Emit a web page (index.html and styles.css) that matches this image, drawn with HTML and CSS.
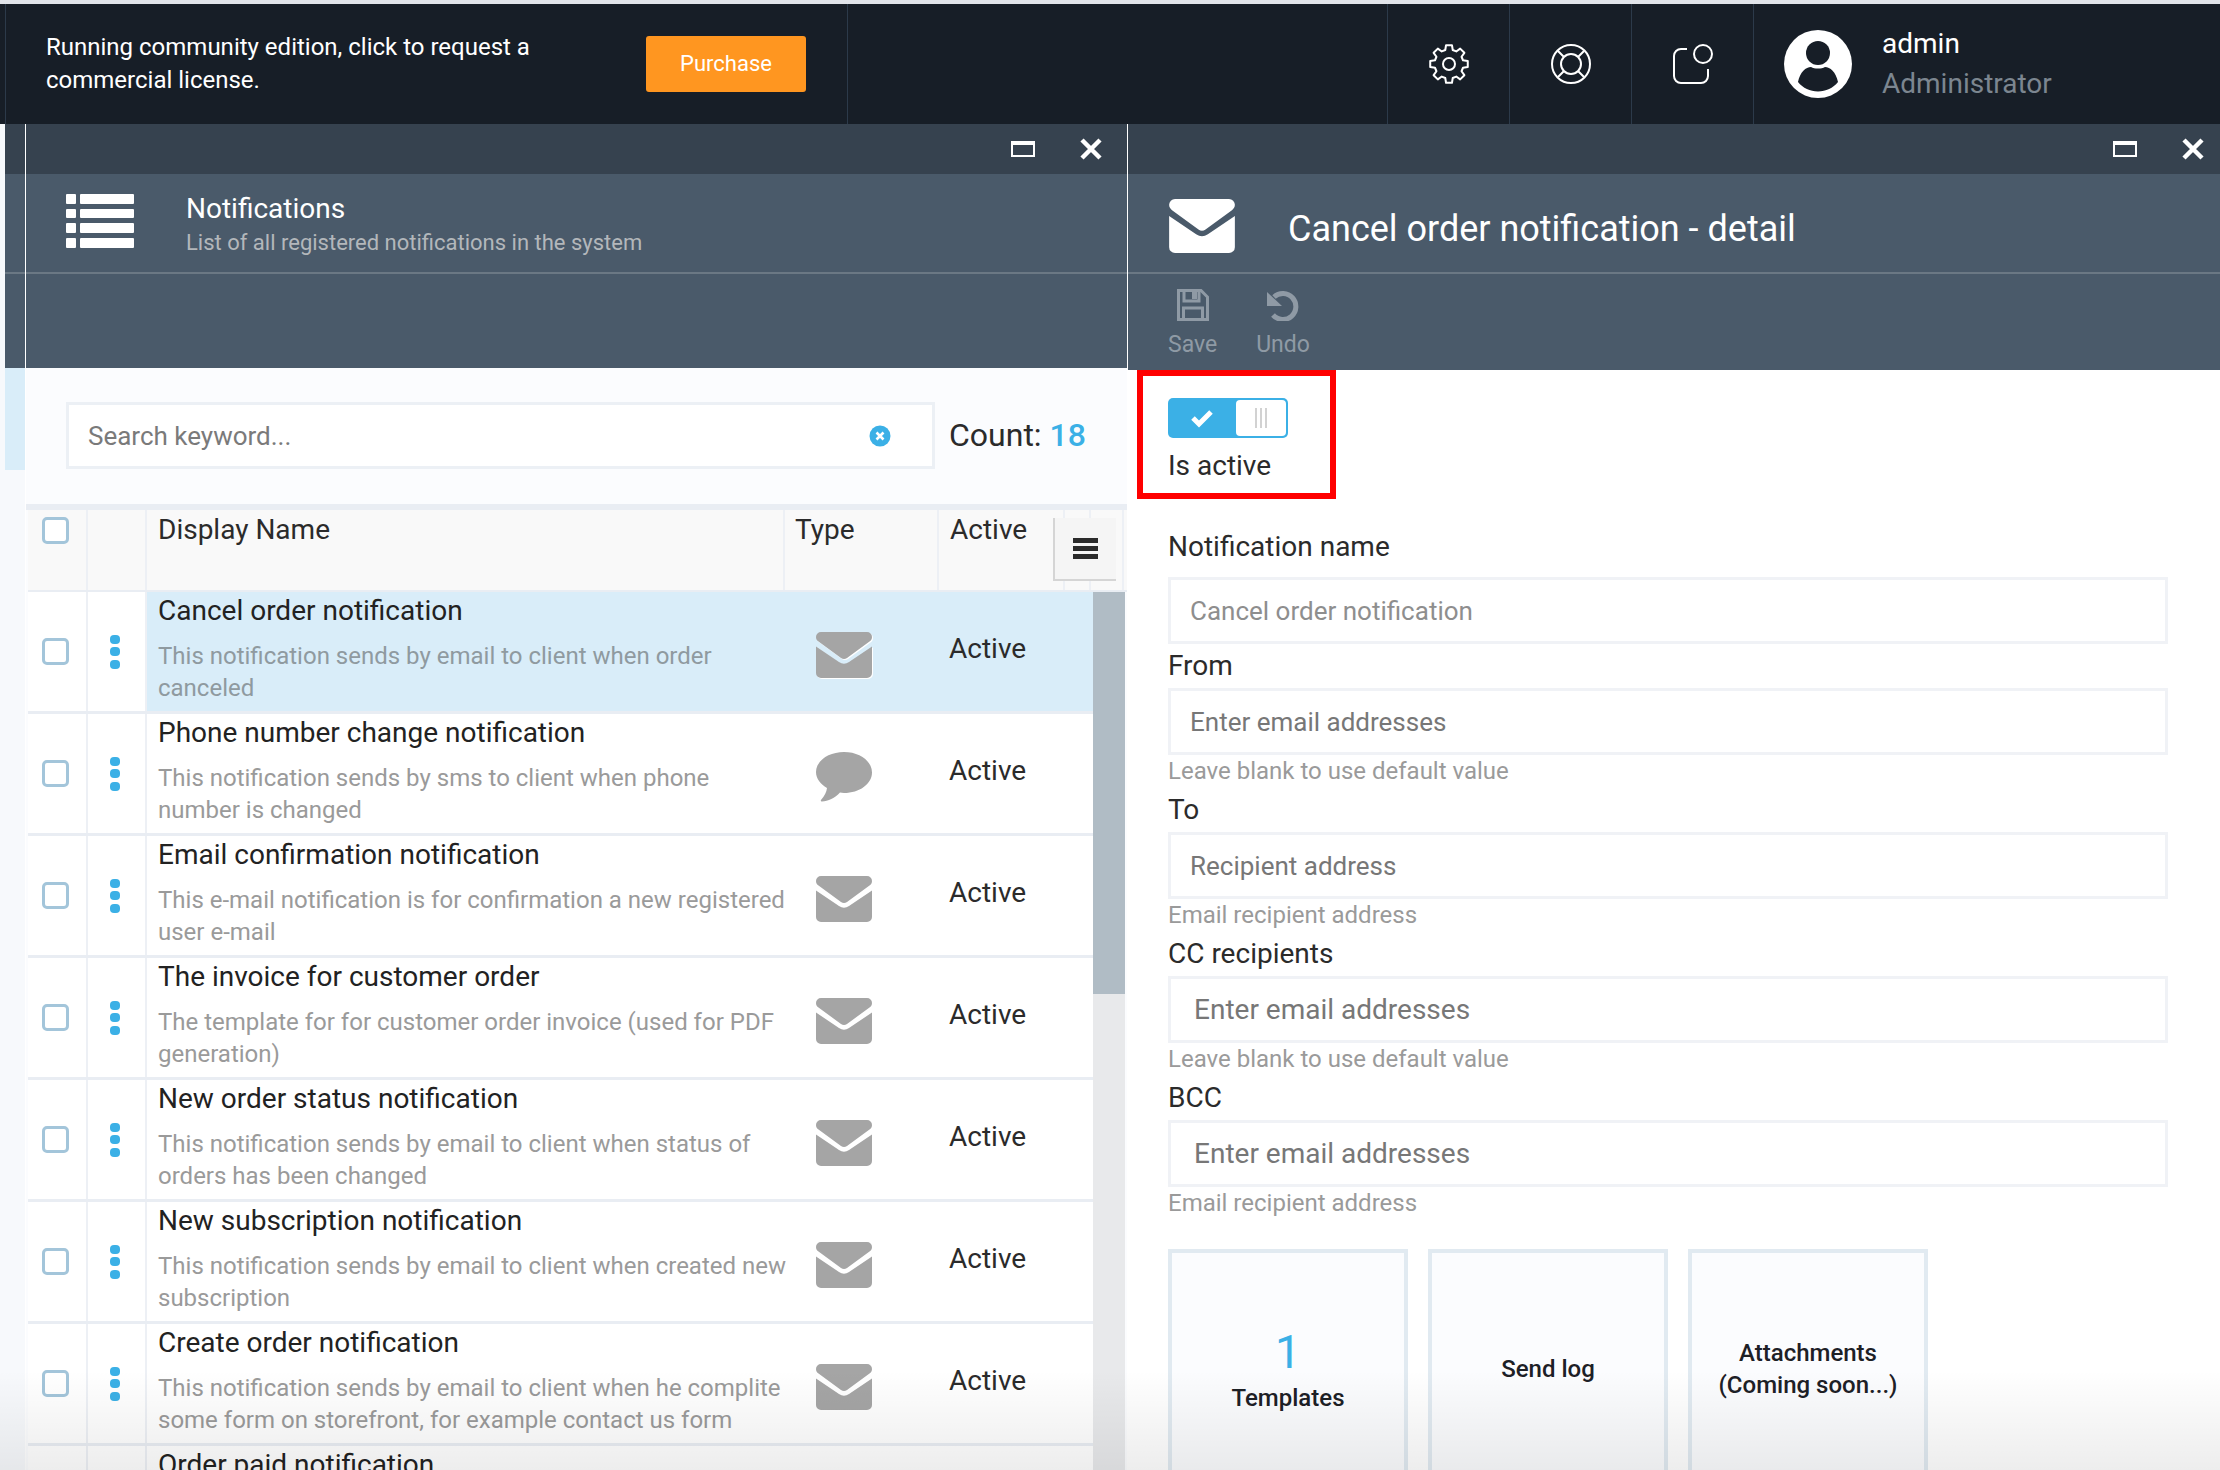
FILE: index.html
```html
<!DOCTYPE html>
<html lang="en">
<head>
  <meta charset="UTF-8">
  <title>Notifications</title>
  <link rel="stylesheet" href="styles.css">
</head>
<body>

  <svg class="defs" width="0" height="0">
    <symbol id="mail" viewBox="0 0 56 46">
      <path d="M0 5a5 5 0 0 1 5-5h46a5 5 0 0 1 5 5c0 2-1 3.500-2.500 4.500L31 26q-3 2-6 0L2.500 9.500C1 8.500 0 7 0 5z"/>
      <path d="M0 14.500L23 30q5 3.500 10 0L56 14.500V41a5 5 0 0 1-5 5H5a5 5 0 0 1-5-5z"/>
    </symbol>
    <symbol id="dots" viewBox="0 0 10 34">
      <rect width="10" height="9" rx="4"/>
      <rect y="12" width="10" height="9" rx="4"/>
      <rect y="25" width="10" height="9" rx="4"/>
    </symbol>
    <symbol id="bubble" viewBox="0 0 56 50">
      <path d="M28 0C12.500 0 0 8.900 0 20c0 6.500 4.500 12.300 11 16-.4 4-2.500 8-6 12-.5 1 0 1.500 1 1.500 6 0 13-3.500 18-9 1.300.3 2.600.5 4 .5 15.500 0 28-9 28-20.500S43.500 0 28 0z"/>
    </symbol>
  </svg>

  <header class="topbar">
    <div class="license">
      <p>Running community edition, click to request a commercial license.</p>
      <button class="purchase">Purchase</button>
    </div>
    <div class="topbar-space"></div>
    <div class="top-icon">
      <svg width="40" height="40" viewBox="0 0 40 40" fill="none" stroke="#fff" stroke-width="2" stroke-linejoin="round">
        <polygon points="16.25,6 17.03,1.23 22.97,1.23 23.75,6 27.25,7.45 31.17,4.63 35.37,8.83 32.55,12.75 34,16.25 38.77,17.03 38.77,22.97 34,23.75 32.55,27.25 35.37,31.17 31.17,35.37 27.25,32.55 23.75,34 22.97,38.77 17.03,38.77 16.25,34 12.75,32.55 8.83,35.37 4.63,31.17 7.45,27.25 6,23.75 1.23,22.97 1.23,17.03 6,16.25 7.45,12.75 4.63,8.83 8.83,4.63 12.75,7.45"/>
        <circle cx="20" cy="20" r="6"/>
      </svg>
    </div>
    <div class="top-icon">
      <svg width="40" height="40" viewBox="0 0 40 40" fill="none" stroke="#fff" stroke-width="2">
        <circle cx="20" cy="20" r="19"/>
        <circle cx="20" cy="20" r="10"/>
        <path d="M7 7l6 6M33 7l-6 6M7 33l6-6M33 33l-6-6"/>
      </svg>
    </div>
    <div class="top-icon">
      <svg width="40" height="40" viewBox="0 0 40 40" fill="none" stroke="#fff" stroke-width="2">
        <path d="M14 5H8a7 7 0 0 0-7 7v20a7 7 0 0 0 7 7h20a7 7 0 0 0 7-7v-7"/>
        <circle cx="30" cy="10" r="9"/>
      </svg>
    </div>
    <div class="user">
      <svg width="68" height="68" viewBox="0 0 68 68">
        <circle cx="34" cy="34" r="34" fill="#fff"/>
        <circle cx="34" cy="23" r="12" fill="#171e27"/>
        <path d="M14 52c2-10 8-15 13-15 2 1 4 1.500 7 1.500s5-.5 7-1.500c5 0 11 5 13 15-5 6-12 9.500-20 9.500s-15-3.500-20-9.500z" fill="#171e27"/>
      </svg>
      <div>
        <div class="user-name">admin</div>
        <div class="user-role">Administrator</div>
      </div>
    </div>
  </header>

  <main class="workspace">
    <section class="blade blade-list">
      <div class="blade-behind">
        <div class="behind-selected"></div>
      </div>
      <div class="blade-main">
        <div class="blade-controls controls-list">
          <span class="ctl-max"></span>
          <svg class="ctl-close" width="24" height="24" viewBox="0 0 24 24"><path d="M3 3l18 18M21 3L3 21" stroke="#fff" stroke-width="4.500"/></svg>
        </div>
        <div class="blade-head">
          <svg class="head-icon" width="68" height="54" viewBox="0 0 68 54" fill="#fff">
            <rect y="0" width="10" height="10" rx="1"/><rect x="14" y="0" width="54" height="10" rx="1"/>
            <rect y="15" width="10" height="9" rx="1"/><rect x="14" y="15" width="54" height="9" rx="1"/>
            <rect y="29" width="10" height="10" rx="1"/><rect x="14" y="29" width="54" height="10" rx="1"/>
            <rect y="44" width="10" height="10" rx="1"/><rect x="14" y="44" width="54" height="10" rx="1"/>
          </svg>
          <div>
            <div class="head-title">Notifications</div>
            <div class="head-sub">List of all registered notifications in the system</div>
          </div>
        </div>
        <div class="blade-toolbar"></div>

        <div class="search-row">
          <div class="search-box">
            <input class="search-input" placeholder="Search keyword...">
            <svg width="22" height="22" viewBox="0 0 22 22">
              <circle cx="11" cy="11" r="10.500" fill="#3bb0e6"/>
              <path d="M7.500 7.500l7 7M14.500 7.500l-7 7" stroke="#fff" stroke-width="2.600"/>
            </svg>
          </div>
          <div class="count">Count: <b>18</b></div>
        </div>

        <div class="table">
          <div class="row row-head">
            <div class="cell cell-check"><span class="check"></span></div>
            <div class="cell"></div>
            <div class="cell cell-text">Display Name</div>
            <div class="cell cell-text cell-type">Type</div>
            <div class="cell cell-text">Active</div>
            <div class="cell"></div>
            <div class="cell"></div>
            <div class="columns-btn"><i></i><i></i><i></i></div>
          </div>
          <div class="table-body">
            <div class="rows">
              <div class="row row-selected">
                <div class="cell cell-check"><span class="check"></span></div>
                <div class="cell cell-dots"><svg width="10" height="34" class="dots"><use href="#dots"/></svg></div>
                <div class="cell cell-name"><div class="name">Cancel order notification</div><div class="desc">This notification sends by email to client when order canceled</div></div>
                <div class="cell cell-icon"><svg width="56" height="46" class="type-icon"><use href="#mail"/></svg></div>
                <div class="cell cell-status">Active</div>
              </div>
              <div class="row">
                <div class="cell cell-check"><span class="check"></span></div>
                <div class="cell cell-dots"><svg width="10" height="34" class="dots"><use href="#dots"/></svg></div>
                <div class="cell cell-name"><div class="name">Phone number change notification</div><div class="desc">This notification sends by sms to client when phone number is changed</div></div>
                <div class="cell cell-icon"><svg width="56" height="50" class="type-icon"><use href="#bubble"/></svg></div>
                <div class="cell cell-status">Active</div>
              </div>
              <div class="row">
                <div class="cell cell-check"><span class="check"></span></div>
                <div class="cell cell-dots"><svg width="10" height="34" class="dots"><use href="#dots"/></svg></div>
                <div class="cell cell-name"><div class="name">Email confirmation notification</div><div class="desc">This e-mail notification is for confirmation a new registered user e-mail</div></div>
                <div class="cell cell-icon"><svg width="56" height="46" class="type-icon"><use href="#mail"/></svg></div>
                <div class="cell cell-status">Active</div>
              </div>
              <div class="row">
                <div class="cell cell-check"><span class="check"></span></div>
                <div class="cell cell-dots"><svg width="10" height="34" class="dots"><use href="#dots"/></svg></div>
                <div class="cell cell-name"><div class="name">The invoice for customer order</div><div class="desc">The template for for customer order invoice (used for PDF generation)</div></div>
                <div class="cell cell-icon"><svg width="56" height="46" class="type-icon"><use href="#mail"/></svg></div>
                <div class="cell cell-status">Active</div>
              </div>
              <div class="row">
                <div class="cell cell-check"><span class="check"></span></div>
                <div class="cell cell-dots"><svg width="10" height="34" class="dots"><use href="#dots"/></svg></div>
                <div class="cell cell-name"><div class="name">New order status notification</div><div class="desc">This notification sends by email to client when status of orders has been changed</div></div>
                <div class="cell cell-icon"><svg width="56" height="46" class="type-icon"><use href="#mail"/></svg></div>
                <div class="cell cell-status">Active</div>
              </div>
              <div class="row">
                <div class="cell cell-check"><span class="check"></span></div>
                <div class="cell cell-dots"><svg width="10" height="34" class="dots"><use href="#dots"/></svg></div>
                <div class="cell cell-name"><div class="name">New subscription notification</div><div class="desc">This notification sends by email to client when created new subscription</div></div>
                <div class="cell cell-icon"><svg width="56" height="46" class="type-icon"><use href="#mail"/></svg></div>
                <div class="cell cell-status">Active</div>
              </div>
              <div class="row">
                <div class="cell cell-check"><span class="check"></span></div>
                <div class="cell cell-dots"><svg width="10" height="34" class="dots"><use href="#dots"/></svg></div>
                <div class="cell cell-name"><div class="name">Create order notification</div><div class="desc">This notification sends by email to client when he complite some form on storefront, for example contact us form</div></div>
                <div class="cell cell-icon"><svg width="56" height="46" class="type-icon"><use href="#mail"/></svg></div>
                <div class="cell cell-status">Active</div>
              </div>
              <div class="row">
                <div class="cell cell-check"></div>
                <div class="cell cell-dots"></div>
                <div class="cell cell-name"><div class="name">Order paid notification</div></div>
                <div class="cell cell-icon"></div>
                <div class="cell cell-status"></div>
              </div>
            </div>
            <div class="scroll-track"><div class="scroll-thumb"></div></div>
          </div>
        </div>
      </div>
    </section>

    <section class="blade blade-detail">
      <div class="blade-controls controls-detail">
        <span class="ctl-max"></span>
        <svg class="ctl-close" width="24" height="24" viewBox="0 0 24 24"><path d="M3 3l18 18M21 3L3 21" stroke="#fff" stroke-width="4.500"/></svg>
      </div>
      <div class="blade-head">
        <svg class="head-mail" width="68" height="54"><use href="#mail"/></svg>
        <div class="detail-title">Cancel order notification - detail</div>
      </div>
      <div class="blade-toolbar toolbar-detail">
        <div class="tool">
          <svg width="32" height="32" viewBox="0 0 32 32" fill="none" stroke="#8f9aa5" stroke-width="3">
            <path d="M1.500 1.500H24L30.500 8v22.500H1.500z"/>
            <path d="M7 2v10h15V2M6.500 30V19h19v11"/>
            <rect x="15" y="3" width="5" height="7" fill="#8f9aa5" stroke="none"/>
          </svg>
          <span>Save</span>
        </div>
        <div class="tool">
          <svg width="32" height="32" viewBox="0 0 32 32" fill="none" stroke="#8f9aa5" stroke-width="5">
            <path d="M7 8a13 13 0 1 1-1 18"/>
            <path d="M0 3v14h15z" stroke="none" fill="#8f9aa5"/>
          </svg>
          <span>Undo</span>
        </div>
      </div>

      <div class="form">
        <div class="annotation"></div>
        <div class="toggle">
          <svg width="24" height="20" viewBox="0 0 24 20"><path d="M3 10l6 6L21 4" fill="none" stroke="#fff" stroke-width="5"/></svg>
          <div class="toggle-knob"><i></i><i></i><i></i></div>
        </div>
        <div class="toggle-label">Is active</div>

        <label class="field-label first-label">Notification name</label>
        <input class="field-input first-input" placeholder="Cancel order notification">

        <label class="field-label">From</label>
        <input class="field-input" placeholder="Enter email addresses">
        <div class="hint">Leave blank to use default value</div>

        <label class="field-label">To</label>
        <input class="field-input" placeholder="Recipient address">
        <div class="hint">Email recipient address</div>

        <label class="field-label">CC recipients</label>
        <input class="field-input field-input-large" placeholder="Enter email addresses">
        <div class="hint">Leave blank to use default value</div>

        <label class="field-label">BCC</label>
        <input class="field-input field-input-large" placeholder="Enter email addresses">
        <div class="hint">Email recipient address</div>

        <div class="tiles">
          <div class="tile"><div class="tile-num">1</div><div>Templates</div></div>
          <div class="tile"><div>Send log</div></div>
          <div class="tile"><div>Attachments<br>(Coming soon...)</div></div>
        </div>
      </div>
    </section>
  </main>

  <div class="bottom-fade"></div>

</body>
</html>
```

FILE: styles.css
```css
* {
  box-sizing: border-box;
}

html, body {
  height: 100%;
}

body {
  margin: 0;
  height: 1470px;
  padding-top: 4px;
  overflow: hidden;
  background-color: #e1e4ea;
  font-family: Roboto, sans-serif;
  color: #2b2b2b;
  position: relative;
}

.defs {
  display: block;
  height: 0;
}

/* top bar */
.topbar {
  display: flex;
  height: 120px;
  background-color: #171e27;
  color: #fff;
}

.license {
  display: flex;
  align-items: center;
  width: 843px;
  padding-left: 40px;
  border-left: 1px solid #2c3a4a;
  border-right: 1px solid #2c3a4a;
  margin-left: 5px;
}

.license p {
  margin: 0;
  width: 520px;
  flex: none;
  font-size: 24px;
  line-height: 33px;
}

.purchase {
  width: 160px;
  height: 56px;
  margin-left: 80px;
  padding-bottom: 3px;
  flex: none;
  border: none;
  border-radius: 3px;
  background-color: #ff9620;
  color: #fff;
  font-family: Roboto, sans-serif;
  font-size: 22px;
}

.topbar-space {
  width: 539px;
}

.top-icon {
  display: flex;
  align-items: center;
  justify-content: center;
  width: 122px;
  border-left: 1px solid #2c3a4a;
}

.user {
  display: flex;
  align-items: center;
  gap: 30px;
  padding-left: 30px;
  border-left: 1px solid #2c3a4a;
}

.user-name {
  font-size: 28px;
  line-height: 40px;
}

.user-role {
  font-size: 28px;
  line-height: 40px;
  color: #7c8690;
}

/* blades */
.workspace {
  display: flex;
  height: 1346px;
}

.blade-list {
  display: flex;
  flex: 0 0 1127px;
  background-color: #f7f9fc;
}

.blade-behind {
  flex: 0 0 26px;
  padding-left: 5px;
  background:
    linear-gradient(#36424f 50px, #4a5a6a 50px, #4a5a6a 148px, #6b7884 148px, #6b7884 150px, #4a5a6a 150px, #4a5a6a 244px, transparent 244px);
  background-clip: content-box;
  border-right: 1px solid #fff;
}

.behind-selected {
  margin-top: 244px;
  height: 102px;
  background-color: #d9edf9;
}

.blade-main {
  flex: 1;
  min-width: 0;
  background-color: #fbfcfe;
}

.blade-detail {
  flex: 1;
  border-left: 1px solid #fff;
  background-color: #fff;
}

.blade-controls {
  display: flex;
  justify-content: flex-end;
  align-items: center;
  gap: 44px;
  height: 50px;
  background-color: #36424f;
}

.controls-list {
  padding-right: 24px;
}

.controls-detail {
  padding-right: 15px;
}

.ctl-max {
  display: block;
  width: 24px;
  height: 16px;
  border: 2px solid #fff;
  border-top-width: 4px;
}

.blade-head {
  display: flex;
  align-items: center;
  height: 100px;
  padding-left: 40px;
  gap: 52px;
  background-color: #4a5a6a;
  border-bottom: 2px solid #6b7884;
  color: #fff;
}

.head-icon {
  margin-top: -4px;
}

.head-title {
  font-size: 28px;
  line-height: 34px;
  margin-top: 3px;
}

.head-sub {
  font-size: 22px;
  line-height: 30px;
  margin-top: 2px;
  color: #b3b7bb;
}

.head-mail {
  fill: #fff;
  margin-top: 6px;
}

.detail-title {
  padding-top: 12px;
  font-size: 36px;
}

.blade-toolbar {
  height: 94px;
  background-color: #4a5a6a;
}

.toolbar-detail {
  display: flex;
  gap: 39px;
  height: 96px;
  padding: 15px 0 0 40px;
}

.tool {
  display: flex;
  flex-direction: column;
  align-items: center;
  gap: 10px;
  color: #8f9aa5;
  font-size: 23px;
}

/* search */
.search-row {
  display: flex;
  align-items: flex-start;
  height: 142px;
  padding: 34px 0 0 40px;
  gap: 14px;
  border-bottom: 6px solid #e9edf3;
}

.search-box {
  display: flex;
  align-items: center;
  width: 869px;
  height: 67px;
  padding: 0 41px 0 17px;
  border: 3px solid #ecf0f5;
  background-color: #fff;
}

.search-input {
  flex: 1;
  border: none;
  outline: none;
  background: none;
  font-family: Roboto, sans-serif;
  font-size: 26px;
}

.search-input::placeholder {
  color: #7a7a7a;
}

.count {
  font-size: 32px;
  line-height: 67px;
}

.count b {
  font-weight: 500;
  color: #3bb0e6;
}

/* table */
.table {
  padding-left: 2px;
}

.row {
  display: grid;
  grid-template-columns: 60px 59px 638px 154px 154px;
  height: 122px;
  background-color: #fff;
  border-bottom: 3px solid #e9edf3;
}

.row-head {
  grid-template-columns: 60px 59px 638px 154px 126px 26px 33px;
  height: 82px;
  background-color: #f9f9f9;
  position: relative;
  border-bottom-width: 2px;
}

.row-selected {
  background: linear-gradient(90deg, #fff 119px, #d9edf9 119px);
}

.cell {
  border-right: 2px solid #edf0f5;
  min-width: 0;
}

.row-selected .cell:nth-child(n+3) {
  border-right: none;
}

.cell-check {
  display: flex;
  align-items: center;
  justify-content: center;
  padding-right: 4px;
}

.row-head .cell-check {
  align-items: flex-start;
  padding-top: 7px;
}

.check {
  display: block;
  width: 27px;
  height: 27px;
  border: 3px solid #a3c5da;
  border-radius: 5px;
  background-color: #fff;
}

.cell-text {
  padding: 2px 0 0 11px;
  font-size: 28px;
  line-height: 36px;
}

.cell-type {
  padding-left: 10px;
}

.columns-btn {
  position: absolute;
  top: 8px;
  right: 11px;
  display: flex;
  flex-direction: column;
  justify-content: center;
  gap: 3px;
  width: 63px;
  height: 63px;
  padding: 0 18px;
  background-color: #f5f5f5;
  border-left: 2px solid #d5d5d5;
  border-bottom: 2px solid #d5d5d5;
}

.columns-btn i {
  display: block;
  height: 5px;
  background-color: #2b2b2b;
}

.table-body {
  display: flex;
}

.rows {
  flex: 0 0 1065px;
  min-width: 0;
}

.scroll-track {
  flex: 0 0 32px;
  height: 900px;
  background-color: #e8e9eb;
}

.scroll-thumb {
  height: 402px;
  background-color: #b0bcc5;
}

.cell-dots {
  display: flex;
  align-items: center;
  justify-content: center;
  padding-right: 4px;
}

.dots {
  fill: #3bb0e6;
}

.cell-name {
  padding-left: 11px;
  border-right: none;
}

.name {
  font-size: 28px;
  line-height: 34px;
  margin-top: 2px;
  color: #222;
}

.desc {
  margin: 12px -12px 0 0;
  font-size: 24px;
  line-height: 32px;
  color: #9a9a9a;
}

.row-selected .desc {
  color: #8f9aa0;
}

.cell-icon {
  display: flex;
  align-items: center;
  padding: 7px 0 0 31px;
  border-right: none;
}

.type-icon {
  fill: #a5a5a5;
  filter: drop-shadow(1px 1px 0 #fff);
}

.cell-status {
  display: flex;
  align-items: center;
  padding-left: 10px;
  padding-bottom: 6px;
  font-size: 28px;
  border-right: none;
}

/* detail form */
.form {
  position: relative;
  padding: 28px 52px 0 40px;
}

.annotation {
  position: absolute;
  top: 0;
  left: 9px;
  width: 199px;
  height: 129px;
  border: 6px solid #ff0000;
}

.toggle {
  display: flex;
  align-items: center;
  justify-content: space-between;
  width: 120px;
  height: 40px;
  padding: 2px 2px 2px 22px;
  border-radius: 5px;
  background-color: #3bb0e6;
}

.toggle-knob {
  display: flex;
  align-items: center;
  justify-content: center;
  gap: 3px;
  width: 50px;
  height: 36px;
  border-radius: 4px;
  background-color: #fff;
}

.toggle-knob i {
  display: block;
  width: 2px;
  height: 20px;
  background-color: #d2d2d2;
}

.toggle-label {
  margin-top: 12px;
  font-size: 28px;
  line-height: 32px;
}

.field-label {
  display: block;
  margin: 6px 0;
  font-size: 28px;
  line-height: 32px;
}

.first-label {
  margin: 49px 0 14px;
}

.field-input {
  display: block;
  width: 100%;
  height: 67px;
  padding: 0 19px;
  border: 3px solid #f0f2f6;
  outline: none;
  background-color: #fff;
  font-family: Roboto, sans-serif;
  font-size: 26px;
}

.field-input::placeholder {
  color: #777;
}

.first-input::placeholder {
  color: #8e8e8e;
}

.field-input-large {
  padding-left: 23px;
  font-size: 28px;
}

.hint {
  font-size: 24px;
  line-height: 33px;
  color: #9a9a9a;
}

.tiles {
  display: flex;
  gap: 20px;
  margin-top: 29px;
}

.tile {
  display: flex;
  flex-direction: column;
  align-items: center;
  justify-content: center;
  width: 240px;
  height: 240px;
  border: 4px solid #e1eaf1;
  background-color: #fbfcfe;
  text-align: center;
  font-size: 24px;
  font-weight: 500;
  line-height: 32px;
  color: #1d2026;
}

.tile-num {
  margin-bottom: 5px;
  padding-top: 3px;
  font-size: 46px;
  line-height: 50px;
  font-weight: 400;
  color: #3bb0e6;
}

.bottom-fade {
  position: absolute;
  left: 0;
  right: 0;
  bottom: 0;
  height: 100px;
  background: linear-gradient(rgba(0, 0, 0, 0), rgba(0, 0, 0, 0.07));
  pointer-events: none;
}
```
